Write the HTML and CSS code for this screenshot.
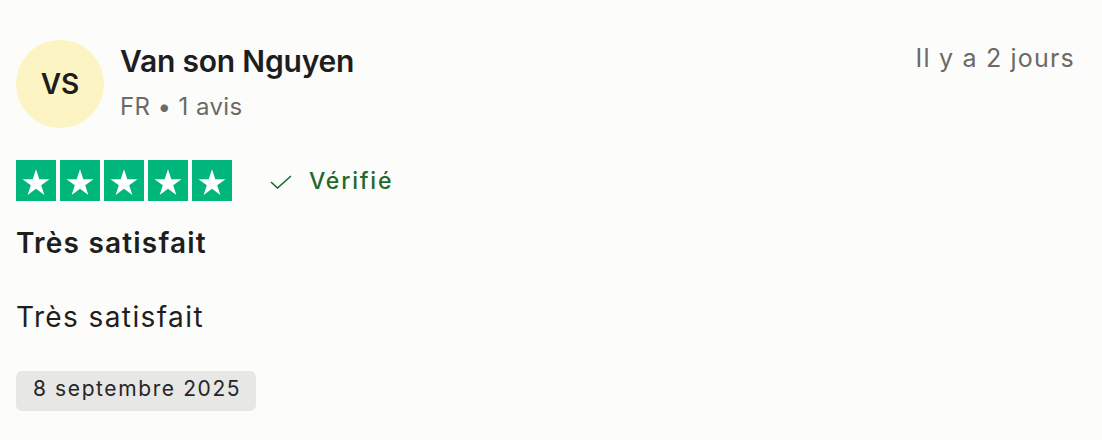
FILE: index.html
```html
<!DOCTYPE html>
<html lang="fr">
<head>
<meta charset="utf-8">
<link rel="stylesheet" href="styles.css">
</head>
<body>
<article class="review">
  <header class="head">
    <div class="user">
      <div class="avatar">VS</div>
      <div class="who">
        <div class="name">Van son Nguyen</div>
        <div class="meta">FR • 1 avis</div>
      </div>
    </div>
    <time class="when">Il y a 2 jours</time>
  </header>
  <div class="rating">
    <div class="stars">
      <span class="star"><svg viewBox="0 0 24 24"><path d="M12 3.2l2.5 7.4h7.6l-6.2 4.5 2.4 7.4-6.3-4.6-6.3 4.6 2.4-7.4-6.2-4.5h7.6z" fill="#fff"/></svg></span>
      <span class="star"><svg viewBox="0 0 24 24"><path d="M12 3.2l2.5 7.4h7.6l-6.2 4.5 2.4 7.4-6.3-4.6-6.3 4.6 2.4-7.4-6.2-4.5h7.6z" fill="#fff"/></svg></span>
      <span class="star"><svg viewBox="0 0 24 24"><path d="M12 3.2l2.5 7.4h7.6l-6.2 4.5 2.4 7.4-6.3-4.6-6.3 4.6 2.4-7.4-6.2-4.5h7.6z" fill="#fff"/></svg></span>
      <span class="star"><svg viewBox="0 0 24 24"><path d="M12 3.2l2.5 7.4h7.6l-6.2 4.5 2.4 7.4-6.3-4.6-6.3 4.6 2.4-7.4-6.2-4.5h7.6z" fill="#fff"/></svg></span>
      <span class="star"><svg viewBox="0 0 24 24"><path d="M12 3.2l2.5 7.4h7.6l-6.2 4.5 2.4 7.4-6.3-4.6-6.3 4.6 2.4-7.4-6.2-4.5h7.6z" fill="#fff"/></svg></span>
    </div>
    <div class="verified">
      <svg class="check" viewBox="0 0 22 14"><path d="M1 7l6.5 6L21 1" fill="none" stroke="#1e6a2d" stroke-width="1.6"/></svg>
      <span>Vérifié</span>
    </div>
  </div>
  <h2 class="title">Très satisfait</h2>
  <p class="body">Très satisfait</p>
  <div class="date">8 septembre 2025</div>
</article>
</body>
</html>
```
FILE: styles.css
```css
html, body {
  margin: 0;
  background: #fcfcfb;
}
body {
  font-family: Inter, "Noto Sans", sans-serif;
  color: #1e1e1e;
}
.review {
  padding: 40px 28px 28px 16px;
}
.head {
  display: flex;
  justify-content: space-between;
  align-items: flex-start;
}
.user {
  display: flex;
  gap: 16px;
  align-items: flex-start;
}
.avatar {
  width: 88px;
  height: 88px;
  border-radius: 50%;
  background: #fdf4c3;
  display: flex;
  align-items: center;
  justify-content: center;
  font-size: 28px;
  font-weight: 600;
  color: #1e1e1e;
}
.who {
  padding-top: 1px;
}
.name {
  font-size: 30px;
  font-weight: 600;
  line-height: 40px;
  letter-spacing: -0.2px;
}
.meta {
  font-size: 24px;
  line-height: 32px;
  margin-top: 10px;
  color: #6b6a66;
  letter-spacing: 0.4px;
}
.when {
  font-size: 25px;
  line-height: 32px;
  padding-top: 2px;
  color: #6b6a66;
  letter-spacing: 1.2px;
  margin-right: -1px;
}
.rating {
  display: flex;
  align-items: center;
  gap: 38px;
  margin-top: 32px;
}
.stars {
  display: flex;
  gap: 4px;
}
.star {
  width: 40px;
  height: 41px;
  background: #00b67a;
  display: flex;
  align-items: center;
  justify-content: center;
}
.star svg {
  width: 32px;
  height: 32px;
}
.verified {
  display: flex;
  align-items: center;
  gap: 17px;
  color: #1e6a2d;
  font-size: 23px;
  font-weight: 500;
  letter-spacing: 1.8px;
}
.check {
  width: 22px;
  height: 14px;
  margin-top: 3px;
}
.title {
  font-size: 28px;
  font-weight: 600;
  margin: 25px 0 0;
  line-height: 34px;
  letter-spacing: 1.2px;
}
.body {
  font-size: 28px;
  margin: 40px 0 0;
  line-height: 34px;
  letter-spacing: 1.4px;
}
.date {
  display: inline-block;
  margin-top: 37px;
  background: #e7e7e5;
  border-radius: 6px;
  padding: 0 15px 4px 17px;
  font-size: 21px;
  line-height: 36px;
  letter-spacing: 1.6px;
  color: #262626;
}
```
